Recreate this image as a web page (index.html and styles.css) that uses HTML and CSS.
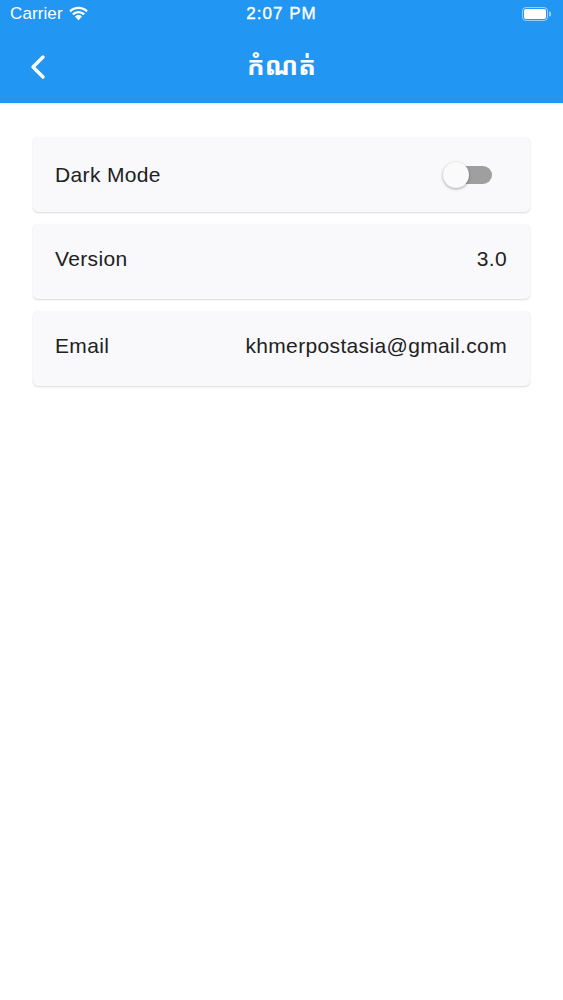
FILE: index.html
```html
<!DOCTYPE html>
<html>
<head>
<meta charset="utf-8">
<link rel="stylesheet" href="styles.css">
</head>
<body>
<header class="appbar">
  <div class="status">
    <div class="status-left">
      <span class="carrier">Carrier</span>
      <svg class="wifi" width="21" height="16" viewBox="0 0 20 15">
        <path d="M10 14.5 L6.6 10.8 A5 5 0 0 1 13.4 10.8 Z" fill="#fff"/>
        <path d="M3.9 8 A8.8 8.8 0 0 1 16.1 8 L14.6 9.6 A6.6 6.6 0 0 0 5.4 9.6 Z" fill="#fff"/>
        <path d="M1.2 5.2 A12.6 12.6 0 0 1 18.8 5.2 L17.3 6.8 A10.4 10.4 0 0 0 2.7 6.8 Z" fill="#fff"/>
      </svg>
    </div>
    <div class="time">2:07 PM</div>
    <div class="status-right">
      <svg width="29" height="14" viewBox="0 0 29 14">
        <rect x="0.5" y="0.5" width="25" height="13" rx="3.5" fill="none" stroke="rgba(255,255,255,0.55)"/>
        <rect x="2" y="2" width="22" height="10" rx="2" fill="#fff"/>
        <path d="M27 4.5 A2 2 0 0 1 27 9.5 Z" fill="rgba(255,255,255,0.55)"/>
      </svg>
    </div>
  </div>
  <div class="nav">
    <svg class="back" width="20" height="26" viewBox="0 0 20 26">
      <path d="M15 3 L5 13 L15 23" fill="none" stroke="#fff" stroke-width="3.4" stroke-linecap="round" stroke-linejoin="round"/>
    </svg>
    <div class="title">កំណត់</div>
  </div>
</header>
<main class="list">
  <div class="card">
    <span class="label">Dark Mode</span>
    <div class="switch"><div class="track"></div><div class="thumb"></div></div>
  </div>
  <div class="card card-info">
    <span class="label">Version</span>
    <span class="value">3.0</span>
  </div>
  <div class="card card-info">
    <span class="label">Email</span>
    <span class="value">khmerpostasia@gmail.com</span>
  </div>
</main>
</body>
</html>
```
FILE: styles.css
```css
* { box-sizing: border-box; }
html, body { margin: 0; padding: 0; background: #fff; }
body {
  font-family: "Liberation Sans", Arial, sans-serif;
  width: 563px;
  height: 1000px;
  overflow: hidden;
}
.appbar {
  background: #2196f3;
  height: 103px;
  color: #fff;
  box-shadow: 0 1px 2px rgba(0,0,0,0.12);
}
.status {
  height: 28px;
  display: flex;
  align-items: center;
  justify-content: space-between;
  padding: 0 12px 0 10px;
  position: relative;
}
.status-left { display: flex; align-items: center; gap: 5px; }
.carrier { font-size: 17px; letter-spacing: 0.1px; }
.wifi { margin-top: -3px; }
.time {
  position: absolute;
  left: 0; right: 0;
  text-align: center;
  font-size: 17px;
  letter-spacing: 1px;
  pointer-events: none;
  -webkit-text-stroke: 0.35px #fff;
}
.status-right { display: flex; align-items: center; }
.nav {
  height: 75px;
  display: flex;
  align-items: center;
  position: relative;
  padding-left: 28px;
  padding-top: 2px;
}
.back { display: block; }
.title {
  position: absolute;
  left: 0; right: 0;
  top: 19px;
  text-align: center;
  font-family: "Noto Sans Khmer", "Khmer OS", "DejaVu Sans", sans-serif;
  font-size: 26px;
  font-weight: bold;
}
.list {
  padding: 34px 33px 0 33px;
  display: flex;
  flex-direction: column;
  gap: 12px;
}
.card {
  height: 75px;
  background: #f9f8fb;
  border-radius: 5px;
  box-shadow: 0 1px 2px rgba(0,0,0,0.14), 0 0 1px rgba(0,0,0,0.06);
  display: flex;
  align-items: center;
  justify-content: space-between;
  padding: 0 23px 0 22px;
  font-size: 21px;
  letter-spacing: 0.35px;
  color: #212121;
}
.card-info { padding-bottom: 5px; }
.switch {
  position: relative;
  width: 52px;
  height: 26px;
  margin-right: 14px;
}
.track {
  position: absolute;
  left: 6px; right: 1px;
  top: 4px;
  height: 18px;
  border-radius: 9px;
  background: #9f9f9f;
}
.thumb {
  position: absolute;
  left: 2px; top: 0;
  width: 26px; height: 26px;
  border-radius: 50%;
  background: #fafafa;
  box-shadow: 0 1px 3px rgba(0,0,0,0.35);
}
```
